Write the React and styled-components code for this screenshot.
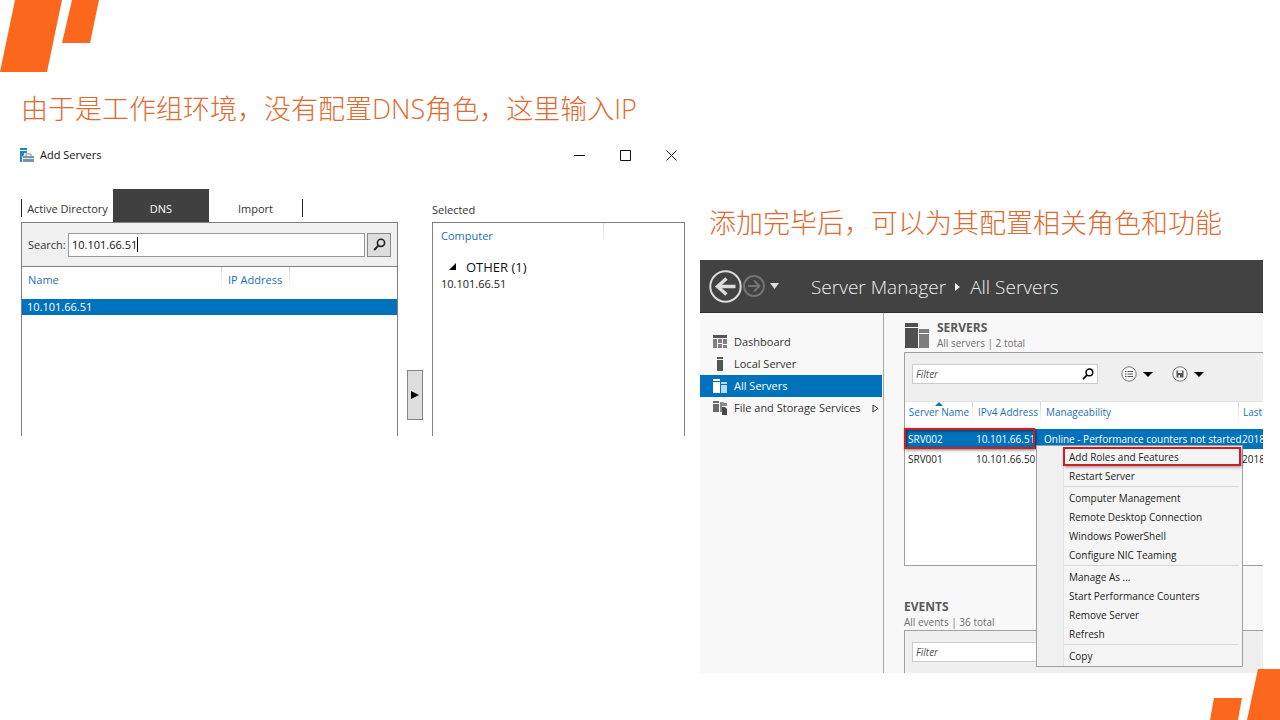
import React from "react";
import styled, { createGlobalStyle, css } from "styled-components";

const BLUE = "#0072bc";
const LINK = "#1c6fb5";
const ORANGE = "#fb681c";

const GlobalStyle = createGlobalStyle`
  *, *::before, *::after { box-sizing: border-box; }
  body {
    margin: 0;
    background: #fff;
    color: #333;
    font: 11px/16px "Open Sans", "Noto Sans", "Noto Sans CJK SC", sans-serif;
  }
  button, input { font: inherit; color: inherit; margin: 0; padding: 0; }
  button { border: 0; background: none; }
  h1, h2, h3, p, ul { margin: 0; padding: 0; }
  svg { display: block; flex: none; }
`;

const Slide = styled.main`
  position: relative;
  min-height: 100vh;
  padding: 89px 17px 47px 20px;
  display: grid;
  grid-template-columns: minmax(0, 665fr) minmax(0, 563fr);
  gap: 15px;
  align-items: start;
  overflow: hidden;
`;

const Corner = styled.svg`
  position: absolute;
  fill: ${ORANGE};
  ${(p) => (p.$end ? "right: 0; bottom: 0;" : "left: 0; top: 0;")}
`;

const Column = styled.section`
  display: flex;
  flex-direction: column;
  padding-top: ${(p) => p.$drop || 0}px;
`;

const Caption = styled.h1`
  padding-left: ${(p) => p.$indent}px;
  font: 300 27px/40px "Open Sans", "Noto Sans CJK SC", sans-serif;
  color: #dd6a30;
  white-space: nowrap;
`;

/* Add Servers dialog */

const Dialog = styled.article`
  padding-top: 14px;
`;

const TitleBar = styled.header`
  display: flex;
  align-items: center;
  gap: 6px;
  height: 24px;
  color: #111;
`;

const WindowTitle = styled.h2`
  flex: 1;
  font-size: 11px;
  font-weight: 400;
`;

const WindowButtons = styled.div`
  display: flex;
  gap: 18px;
`;

const WindowButton = styled.button`
  width: 28px;
  height: 24px;
  display: grid;
  place-items: center;
`;

const DialogBody = styled.div`
  display: grid;
  grid-template-columns: minmax(0, 377fr) 16px minmax(0, 253fr);
  column-gap: 9px;
  padding: 22px 0 0 1px;
`;

const Pane = styled.div`
  display: flex;
  flex-direction: column;
`;

const Tabs = styled.div`
  display: flex;
  align-items: stretch;
  height: 33px;
`;

const Tab = styled.button`
  width: ${(p) => p.$width}px;
  padding-top: 6px;
  white-space: nowrap;
  ${(p) => p.$active && css`background: #404040; color: #fff;`}
`;

const TabEdge = styled.span`
  width: 1px;
  height: 18px;
  margin-top: 10px;
  background: #222;
`;

const PaneLabel = styled.h3`
  height: 33px;
  padding-top: 13px;
  font-size: 11px;
  font-weight: 400;
`;

const ListBox = styled.div`
  height: 214px;
  border: 1px solid #7f7f7f;
  border-bottom: 0;
  background: #fff;
`;

const SearchRow = styled.div`
  display: flex;
  align-items: center;
  gap: 2px;
  height: 44px;
  padding: 0 6px;
  background: #f0f0f0;
  border-bottom: 1px solid #7f7f7f;
`;

const SearchLabel = styled.label`
  width: 38px;
`;

const SearchField = styled.div`
  flex: 1;
  display: flex;
  align-items: center;
  height: 24px;
  padding-left: 3px;
  border: 1px solid #999;
  background: #fff;
`;

const SearchInput = styled.input`
  field-sizing: content;
  height: 18px;
  border: 0;
  outline: 0;
  background: none;
  color: #111;
`;

const Caret = styled.span`
  width: 1px;
  height: 15px;
  background: #000;
`;

const SearchButton = styled.button`
  width: 24px;
  height: 24px;
  display: grid;
  place-items: center;
  border: 1px solid #8a8a8a;
  background: #ddd;
`;

const Table = styled.table`
  width: 100%;
  table-layout: fixed;
  border-collapse: collapse;
  white-space: nowrap;
`;

const HeadCell = styled.th`
  height: ${(p) => p.$height || 32}px;
  width: ${(p) => (p.$width ? `${p.$width}px` : "auto")};
  padding: 0 0 ${(p) => p.$lift || 0}px ${(p) => (p.$pad === undefined ? 6 : p.$pad)}px;
  font-weight: 400;
  text-align: left;
  color: ${LINK};
  background: linear-gradient(#d4d4d4, #fff) right top / ${(p) => (p.$rule ? "1px" : "0")} 22px no-repeat;
`;

const ListRow = styled.tr`
  height: 16px;
  background: ${(p) => (p.$selected ? BLUE : "transparent")};
  color: ${(p) => (p.$selected ? "#fff" : "#222")};
`;

const ListCell = styled.td`
  height: 16px;
  padding: 0 0 0 ${(p) => p.$pad || 5}px;
  line-height: 16px;
`;

const GroupCell = styled.td`
  padding: 2px 0 0 15px;
  height: 20px;
  font-size: 13px;
  color: #111;
`;

const GroupLabel = styled.span`
  display: flex;
  align-items: center;
  gap: 9px;
`;

const MoveButton = styled.button`
  align-self: start;
  margin-top: 181px;
  height: 50px;
  display: grid;
  place-items: center;
  border: 1px solid #858585;
  background: #ddd;
`;

/* Server Manager */

const Manager = styled.article`
  display: flex;
  flex-direction: column;
  height: 413px;
  margin-top: 17px;
  overflow: hidden;
  background: #f8f8f8;
  font-size: 10px;
`;

const ManagerBar = styled.header`
  flex: none;
  display: flex;
  align-items: center;
  height: 53px;
  padding-left: 9px;
  border-bottom: 1px solid #2d2d2d;
  background: #424242;
  color: #eee;
`;

const NavButton = styled.button`
  display: grid;
  place-items: center;
`;

const Crumbs = styled.h2`
  display: flex;
  align-items: center;
  gap: 9px;
  padding: 2px 0 0 30px;
  font: 300 19px/28px "Open Sans", sans-serif;
  white-space: nowrap;
`;

const ManagerBody = styled.div`
  flex: 1;
  display: flex;
  min-height: 0;
`;

const SideNav = styled.nav`
  flex: none;
  width: 184px;
  padding-top: 18px;
  border-right: 1px solid #a8a8a8;
`;

const SideLink = styled.a`
  display: flex;
  align-items: center;
  gap: 6px;
  height: 22px;
  padding: 0 3px 0 13px;
  margin-right: 1px;
  font-size: 11px;
  text-decoration: none;
  white-space: nowrap;
  color: ${(p) => (p.$active ? "#fff" : "#333")};
  background: ${(p) => (p.$active ? BLUE : "transparent")};
`;

const SideText = styled.span`
  flex: 1;
`;

const Content = styled.div`
  flex: 1;
  min-width: 0;
  padding: 7px 0 0 20px;
`;

const Tile = styled.section`
  position: relative;
  margin-bottom: 34px;
`;

const TileHead = styled.div`
  display: flex;
  align-items: center;
  gap: 7px;
  height: 32px;
`;

const TileTitle = styled.h3`
  font-size: 12px;
  line-height: 14px;
  font-weight: 700;
  color: #595959;
`;

const TileSub = styled.p`
  line-height: 16px;
  color: #6f6f6f;
`;

const TilePanel = styled.div`
  height: 214px;
  border: 1px solid #a0a0a0;
  border-right: 0;
  background: #fff;
`;

const FilterBar = styled.div`
  display: flex;
  align-items: center;
  height: 49px;
  padding: 0 7px 6px;
  background: #efefef;
  border-bottom: 1px solid #e4e4e4;
`;

const FilterBox = styled.label`
  display: flex;
  align-items: center;
  width: 186px;
  height: 20px;
  padding: 0 3px;
  border: 1px solid #ccc;
  background: #fff;
`;

const FilterInput = styled.input`
  flex: 1;
  min-width: 0;
  border: 0;
  outline: 0;
  background: none;
  font-style: italic;
  &::placeholder { color: #555; opacity: 1; }
`;

const ToolButton = styled.button`
  display: flex;
  align-items: center;
  gap: 6px;
  margin-left: ${(p) => p.$space}px;
`;

const ServerRow = styled.tr`
  height: 20px;
  background: ${(p) => (p.$selected ? BLUE : "transparent")};
  color: ${(p) => (p.$selected ? "#fff" : "#222")};
`;

const ServerCell = styled.td`
  height: 20px;
  padding: 0 0 0 3px;
`;

const SortHead = styled.span`
  display: flex;
  flex-direction: column;
  align-items: center;
  width: 58px;
  line-height: 12px;
`;

const Highlight = styled.span`
  position: absolute;
  left: 0;
  top: 108px;
  width: 131px;
  height: 21px;
  border: 2px solid #d01c24;
  box-shadow: 1px 1px 3px #0008, inset 1px 1px 3px #0008;
  pointer-events: none;
`;

const Menu = styled.ul`
  position: absolute;
  left: 132px;
  top: 125px;
  width: 207px;
  height: 222px;
  padding: 1px 1px 1px 26px;
  border: 1px solid #a0a0a0;
  background: linear-gradient(90deg, #f0f0f0 26px, #e2e2e2 26px, #e2e2e2 27px, #f5f5f5 27px);
  list-style: none;
  color: #222;
`;

const MenuItem = styled.li`
  display: flex;
`;

const MenuButton = styled.button`
  flex: 1;
  height: 19px;
  padding-left: ${(p) => (p.$marked ? 4 : 6)}px;
  text-align: left;
  white-space: nowrap;
  ${(p) => p.$marked && css`
    border: 2px solid #d01c24;
    box-shadow: 1px 1px 3px #0006;
  `}
`;

const MenuRule = styled.li`
  height: 1px;
  margin: 1px 2px 1px 1px;
  background: #d7d7d7;
`;

const Magnifier = ({ size = 13, color = "#222" }) => (
  <svg width={size} height={size} viewBox="0 0 13 13" fill="none" stroke={color} strokeWidth="1.6">
    <circle cx="8" cy="4.8" r="3.6" />
    <path d="M5.6 7.4 1.2 12" strokeWidth="2" />
  </svg>
);

const Triangle = ({ d, w, h, fill = "#000" }) => (
  <svg width={w} height={h} viewBox={`0 0 ${w} ${h}`} fill={fill}>
    <path d={d} />
  </svg>
);

const ICONS = {
  dashboard: (
    <svg width="15" height="14" viewBox="0 0 15 14" fill="#555">
      <path d="M0 0h14v3H0z" />
      <path d="M0 4h4v9H0zM5 4h4v4H5zM10 4h4v5h-4zM5 9h4v4H5zM10 10h4v3h-4z" fill="#808080" />
    </svg>
  ),
  local: (
    <svg width="15" height="14" viewBox="0 0 15 14" fill="#555">
      <path d="M4 0h6v2H4zM4 3h6v11H4z" />
    </svg>
  ),
  all: (
    <svg width="15" height="14" viewBox="0 0 15 14" fill="#fff">
      <path d="M0 0h7v2H0zM0 3h7v11H0z" />
      <path d="M8 3h6v2H8zM8 6h6v8H8z" fill="#b5dcf5" />
    </svg>
  ),
  files: (
    <svg width="15" height="14" viewBox="0 0 15 14" fill="#6a6a6a">
      <path d="M0 0h6v2H0zM0 3h6v8H0z" />
      <path d="M7 1h3l1 1h3v3H9v6H7z" fill="#8a8a8a" />
      <path d="M9 6h3l2 2v6H9z" fill="#484848" />
    </svg>
  ),
};

const NAV = [
  { id: "dashboard", label: "Dashboard" },
  { id: "local", label: "Local Server" },
  { id: "all", label: "All Servers", active: true },
  { id: "files", label: "File and Storage Services", more: true },
];

const SERVERS = [
  { name: "SRV002", ip: "10.101.66.51", state: "Online - Performance counters not started", last: "2018", selected: true },
  { name: "SRV001", ip: "10.101.66.50", state: "", last: "2018" },
];

const MENU = [
  ["Add Roles and Features", "Restart Server"],
  ["Computer Management", "Remote Desktop Connection", "Windows PowerShell", "Configure NIC Teaming"],
  ["Manage As ...", "Start Performance Counters", "Remove Server", "Refresh"],
  ["Copy"],
];

function AddServers() {
  return (
    <Dialog>
      <TitleBar>
        <svg width="14" height="14" viewBox="0 0 14 14">
          <path d="M0 0h7v2H0zM0 3h7v2H4v2L2 9v5H0z" fill="#1e88c7" />
          <path d="M3 8h11v6H3z" fill="#7b93a8" />
          <path d="M6 8V6h5v2" stroke="#7b93a8" fill="none" />
          <path d="M3 10.5h11" stroke="#dfe8ef" />
        </svg>
        <WindowTitle>Add Servers</WindowTitle>
        <WindowButtons>
          <WindowButton aria-label="Minimize">
            <svg width="11" height="11" stroke="#111" fill="none"><path d="M0 5.5h11" /></svg>
          </WindowButton>
          <WindowButton aria-label="Maximize">
            <svg width="11" height="11" stroke="#111" fill="none"><path d="M.5.5h10v10H.5z" /></svg>
          </WindowButton>
          <WindowButton aria-label="Close">
            <svg width="11" height="11" stroke="#111" fill="none"><path d="M.5.5l10 10M10.5.5l-10 10" /></svg>
          </WindowButton>
        </WindowButtons>
      </TitleBar>
      <DialogBody>
        <Pane>
          <Tabs role="tablist">
            <TabEdge />
            <Tab role="tab" $width={91}>Active Directory</Tab>
            <Tab role="tab" aria-selected="true" $width={96} $active>DNS</Tab>
            <Tab role="tab" $width={93}>Import</Tab>
            <TabEdge />
          </Tabs>
          <ListBox>
            <SearchRow>
              <SearchLabel htmlFor="dns-search">Search:</SearchLabel>
              <SearchField>
                <SearchInput id="dns-search" defaultValue="10.101.66.51" />
                <Caret />
              </SearchField>
              <SearchButton aria-label="Search"><Magnifier /></SearchButton>
            </SearchRow>
            <Table>
              <thead>
                <tr>
                  <HeadCell $width={200} $lift={6} $rule>Name</HeadCell>
                  <HeadCell $width={68} $lift={6} $rule>IP Address</HeadCell>
                  <HeadCell aria-hidden="true" />
                </tr>
              </thead>
              <tbody>
                <ListRow $selected>
                  <ListCell colSpan={3}>10.101.66.51</ListCell>
                </ListRow>
              </tbody>
            </Table>
          </ListBox>
        </Pane>
        <MoveButton aria-label="Add to selected">
          <Triangle w={8} h={8} d="M0 0l8 4-8 4z" />
        </MoveButton>
        <Pane>
          <PaneLabel>Selected</PaneLabel>
          <ListBox>
            <Table>
              <thead>
                <tr>
                  <HeadCell $width={171} $height={33} $lift={8} $pad={8} $rule>Computer</HeadCell>
                  <HeadCell aria-hidden="true" />
                </tr>
              </thead>
              <tbody>
                <tr>
                  <GroupCell colSpan={2}>
                    <GroupLabel>
                      <Triangle w={9} h={8} d="M8 0v7H1z" />
                      OTHER (1)
                    </GroupLabel>
                  </GroupCell>
                </tr>
                <ListRow>
                  <ListCell colSpan={2} $pad={8}>10.101.66.51</ListCell>
                </ListRow>
              </tbody>
            </Table>
          </ListBox>
        </Pane>
      </DialogBody>
    </Dialog>
  );
}

function ServerMenu() {
  return (
    <Menu role="menu">
      {MENU.map((group, g) => (
        <React.Fragment key={g}>
          {g > 0 && <MenuRule role="separator" />}
          {group.map((label, i) => (
            <MenuItem key={label} role="none">
              <MenuButton role="menuitem" $marked={g === 0 && i === 0}>{label}</MenuButton>
            </MenuItem>
          ))}
        </React.Fragment>
      ))}
    </Menu>
  );
}

function ServerManager() {
  return (
    <Manager>
      <ManagerBar>
        <NavButton aria-label="Back">
          <svg width="33" height="33" viewBox="0 0 33 33" fill="none" stroke="#dcdcdc">
            <circle cx="16.5" cy="16.5" r="15.2" strokeWidth="2" />
            <path d="M26.5 16.5H8M17.5 8.5l-9 8 9 8" strokeWidth="3.4" />
          </svg>
        </NavButton>
        <NavButton aria-label="Forward">
          <svg width="24" height="24" viewBox="0 0 24 24" fill="none" stroke="#747474">
            <circle cx="12" cy="12" r="10" strokeWidth="2" />
            <path d="M6 12h11M12 6.5l5.5 5.5-5.5 5.5" strokeWidth="2" />
          </svg>
        </NavButton>
        <NavButton aria-label="History">
          <Triangle w={15} h={6} d="M4 0h9L8.5 6z" fill="#ddd" />
        </NavButton>
        <Crumbs>
          Server Manager
          <Triangle w={6} h={8} d="M0 0l5 4-5 4z" fill="#eee" />
          All Servers
        </Crumbs>
      </ManagerBar>
      <ManagerBody>
        <SideNav>
          {NAV.map((n) => (
            <SideLink key={n.id} href={`#${n.id}`} $active={n.active}>
              {ICONS[n.id]}
              <SideText>{n.label}</SideText>
              {n.more && (
                <svg width="7" height="9" fill="none" stroke="#333"><path d="M1 1l5 3.5L1 8z" /></svg>
              )}
            </SideLink>
          ))}
        </SideNav>
        <Content>
          <Tile>
            <TileHead>
              <svg width="26" height="26" viewBox="0 0 26 26" fill="#4f4f4f">
                <path d="M1 0h13v4H1zM1 5h13v20H1z" />
                <path d="M15 6h10v4H15zM15 11h10v14H15z" fill="#7d7d7d" />
              </svg>
              <div>
                <TileTitle>SERVERS</TileTitle>
                <TileSub>All servers | 2 total</TileSub>
              </div>
            </TileHead>
            <TilePanel>
              <FilterBar>
                <FilterBox>
                  <FilterInput aria-label="Filter servers" placeholder="Filter" />
                  <Magnifier size={12} color="#000" />
                </FilterBox>
                <ToolButton $space={23} aria-label="Group options">
                  <svg width="16" height="16" viewBox="0 0 16 16" fill="none" stroke="#555">
                    <circle cx="8" cy="8" r="7.2" fill="#fafafa" stroke="#777" />
                    <path d="M4 5.5h1.5M6.5 5.5H12M4 8h1.5M6.5 8H12M4 10.5h1.5M6.5 10.5H12" />
                  </svg>
                  <Triangle w={10} h={5} d="M0 0h10L5 5z" />
                </ToolButton>
                <ToolButton $space={19} aria-label="Save options">
                  <svg width="16" height="16" viewBox="0 0 16 16" fill="#555">
                    <circle cx="8" cy="8" r="7.2" fill="#fafafa" stroke="#777" />
                    <path d="M4.5 4.5h7v7h-7z" />
                    <path d="M6 4.5h4V7H6zM6.5 9H8v2.5H6.5z" fill="#fafafa" />
                  </svg>
                  <Triangle w={10} h={5} d="M0 0h10L5 5z" />
                </ToolButton>
              </FilterBar>
              <Table>
                <thead>
                  <tr>
                    <HeadCell $width={68} $height={27} $lift={11} $pad={5} $rule>
                      <SortHead>
                        <Triangle w={8} h={4} d="M0 4l4-4 4 4z" fill={LINK} />
                        Server Name
                      </SortHead>
                    </HeadCell>
                    <HeadCell $width={68} $height={27} $lift={8} $pad={5} $rule>IPv4 Address</HeadCell>
                    <HeadCell $width={198} $height={27} $lift={8} $pad={5} $rule>Manageability</HeadCell>
                    <HeadCell $height={27} $lift={8} $pad={4}>Last</HeadCell>
                  </tr>
                </thead>
                <tbody>
                  {SERVERS.map((s) => (
                    <ServerRow key={s.name} $selected={s.selected}>
                      <ServerCell>{s.name}</ServerCell>
                      <ServerCell>{s.ip}</ServerCell>
                      <ServerCell>{s.state}</ServerCell>
                      <ServerCell>{s.last}</ServerCell>
                    </ServerRow>
                  ))}
                </tbody>
              </Table>
            </TilePanel>
            <Highlight />
            <ServerMenu />
          </Tile>
          <section>
            <TileTitle>EVENTS</TileTitle>
            <TileSub>All events | 36 total</TileSub>
            <TilePanel>
              <FilterBar>
                <FilterBox>
                  <FilterInput aria-label="Filter events" placeholder="Filter" />
                </FilterBox>
              </FilterBar>
            </TilePanel>
          </section>
        </Content>
      </ManagerBody>
    </Manager>
  );
}

export default function App() {
  return (
    <>
      <GlobalStyle />
      <Slide lang="zh-CN">
        <Corner width="100" height="72" aria-hidden="true">
          <path d="M15 0h47L47 72H0zM72 0h27l-9 43H62z" />
        </Corner>
        <Column>
          <Caption $indent={1}>由于是工作组环境，没有配置DNS角色，这里输入IP</Caption>
          <AddServers />
        </Column>
        <Column $drop={114}>
          <Caption $indent={9}>添加完毕后，可以为其配置相关角色和功能</Caption>
          <ServerManager />
        </Column>
        <Corner width="70" height="51" aria-hidden="true" $end>
          <path d="M48 0h22v51H37zM4 29h28l-4 22H0z" />
        </Corner>
      </Slide>
    </>
  );
}
